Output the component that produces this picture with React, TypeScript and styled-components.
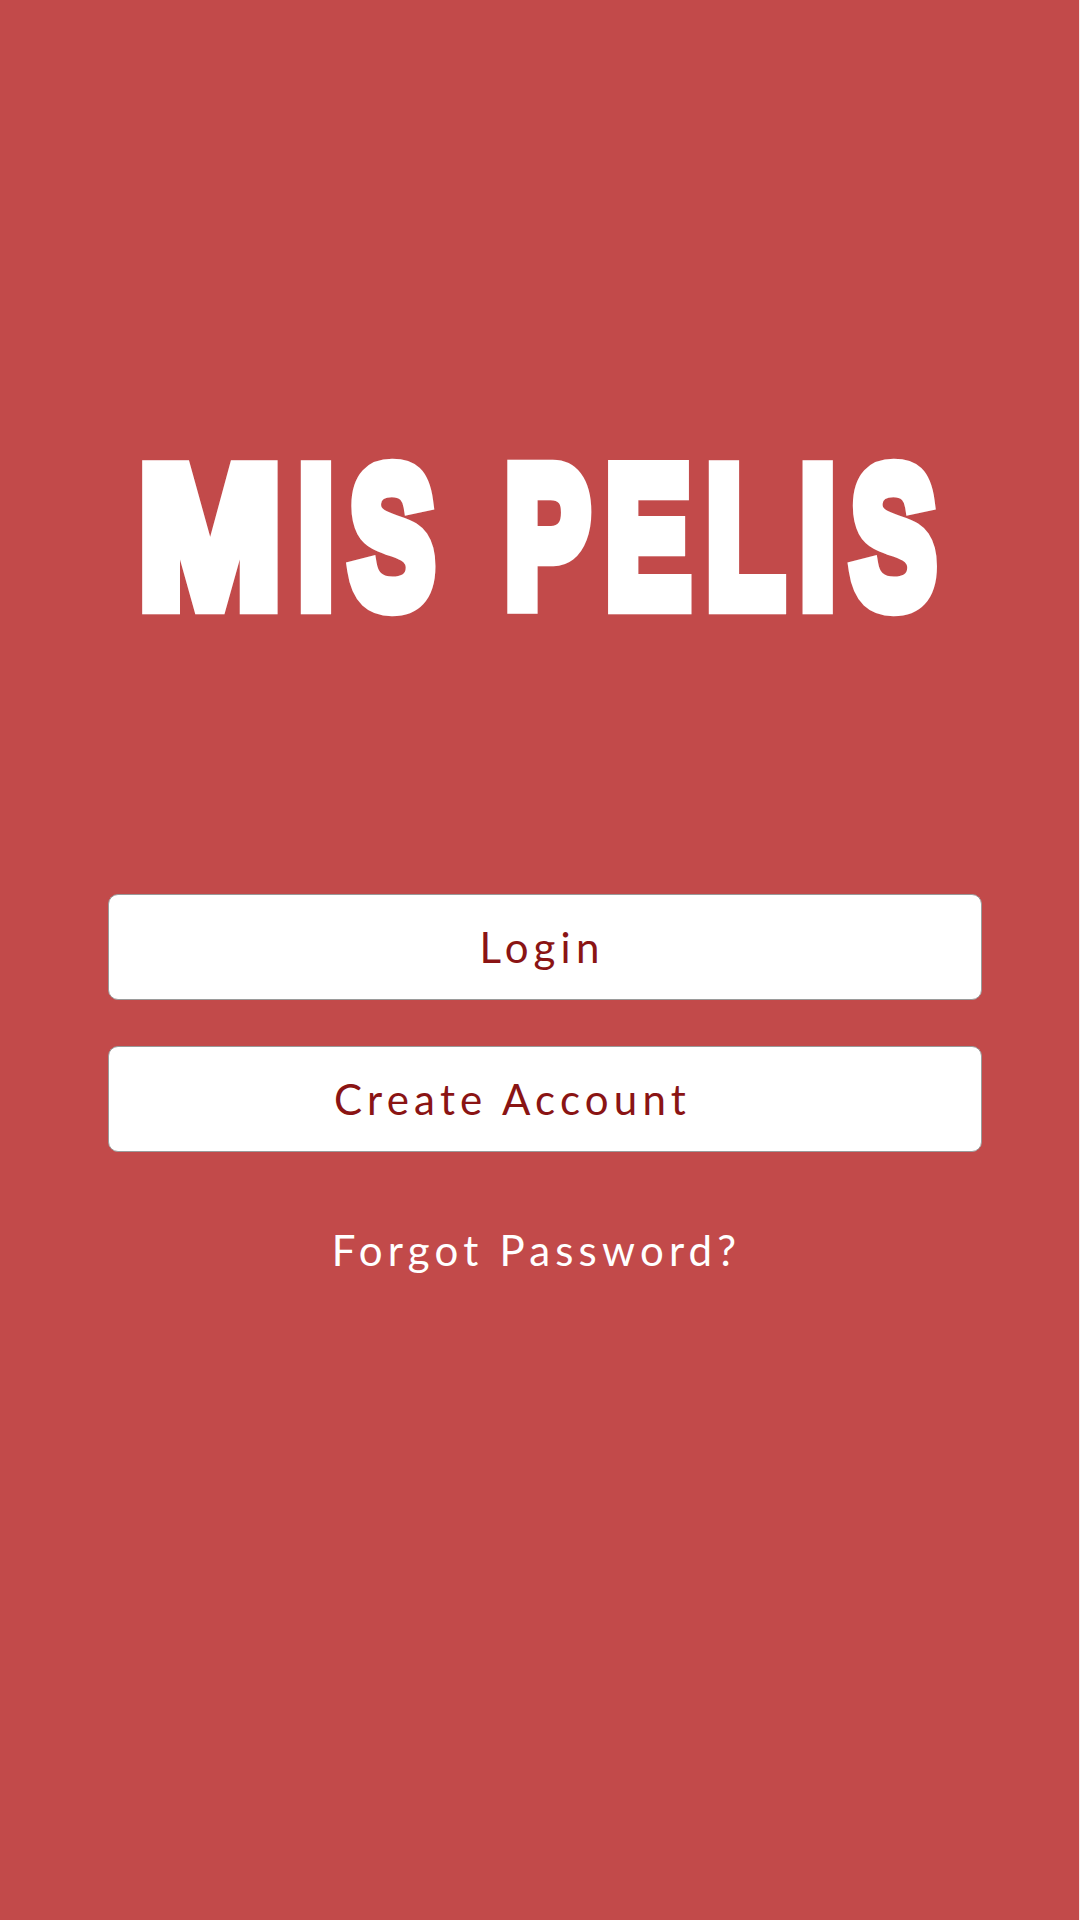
import React from "react";
import styled, { createGlobalStyle } from "styled-components";

const GlobalStyle = createGlobalStyle`
  html, body {
    margin: 0;
    padding: 0;
    background: #f6ecec;
  }
  #root {
    width: 1080px;
  }
`;

const Page = styled.main`
  width: 1079px;
  min-height: 1920px;
  background: #c24a4a;
  display: flex;
  flex-direction: column;
  align-items: center;
  box-sizing: border-box;
  padding-top: 462px;
`;

const TitleBox = styled.div`
  height: 150px;
  display: flex;
  align-items: center;
  justify-content: center;
  margin-bottom: 282px;
`;

const Title = styled.h1`
  margin: 0;
  font-family: "Liberation Sans", Arial, sans-serif;
  font-weight: 700;
  font-size: 150px;
  line-height: 150px;
  letter-spacing: 18.5px;
  word-spacing: 4px;
  color: #ffffff;
  -webkit-text-stroke: 14px #ffffff;
  white-space: nowrap;
  transform: translateX(8px) scale(0.85, 1.31);
  transform-origin: center;
`;

const WideLetter = styled.span`
  display: inline-block;
  margin: 0 20px;
  transform: scaleX(1.34);
  transform-origin: center;
`;

const Actions = styled.div`
  width: 874px;
  margin-left: 10px;
  display: flex;
  flex-direction: column;
  gap: 46px;
`;

const ActionButton = styled.button<{ $shift: number }>`
  height: 106px;
  width: 100%;
  box-sizing: border-box;
  background: #ffffff;
  border: 1px solid #9a9a9a;
  border-radius: 10px;
  display: flex;
  align-items: center;
  justify-content: center;
  padding: 0 ${(p) => p.$shift * 2}px 0 0;
  font-family: Lato, "Open Sans", sans-serif;
  font-weight: 400;
  font-size: 42px;
  letter-spacing: 5.2px;
  color: #8a1414;
  cursor: pointer;
`;

const ForgotLink = styled.a`
  margin-top: 73px;
  font-family: Lato, "Open Sans", sans-serif;
  font-weight: 400;
  font-size: 42px;
  line-height: 50px;
  letter-spacing: 5.2px;
  color: #ffffff;
  text-decoration: none;
  padding-right: 6px;
  cursor: pointer;
`;

export default function App() {
  return (
    <>
      <GlobalStyle />
      <Page>
        <TitleBox>
          <Title>
            <WideLetter>M</WideLetter>IS PELIS
          </Title>
        </TitleBox>
        <Actions>
          <ActionButton $shift={2.5}>Login</ActionButton>
          <ActionButton $shift={32}>Create Account</ActionButton>
        </Actions>
        <ForgotLink>Forgot Password?</ForgotLink>
      </Page>
    </>
  );
}
